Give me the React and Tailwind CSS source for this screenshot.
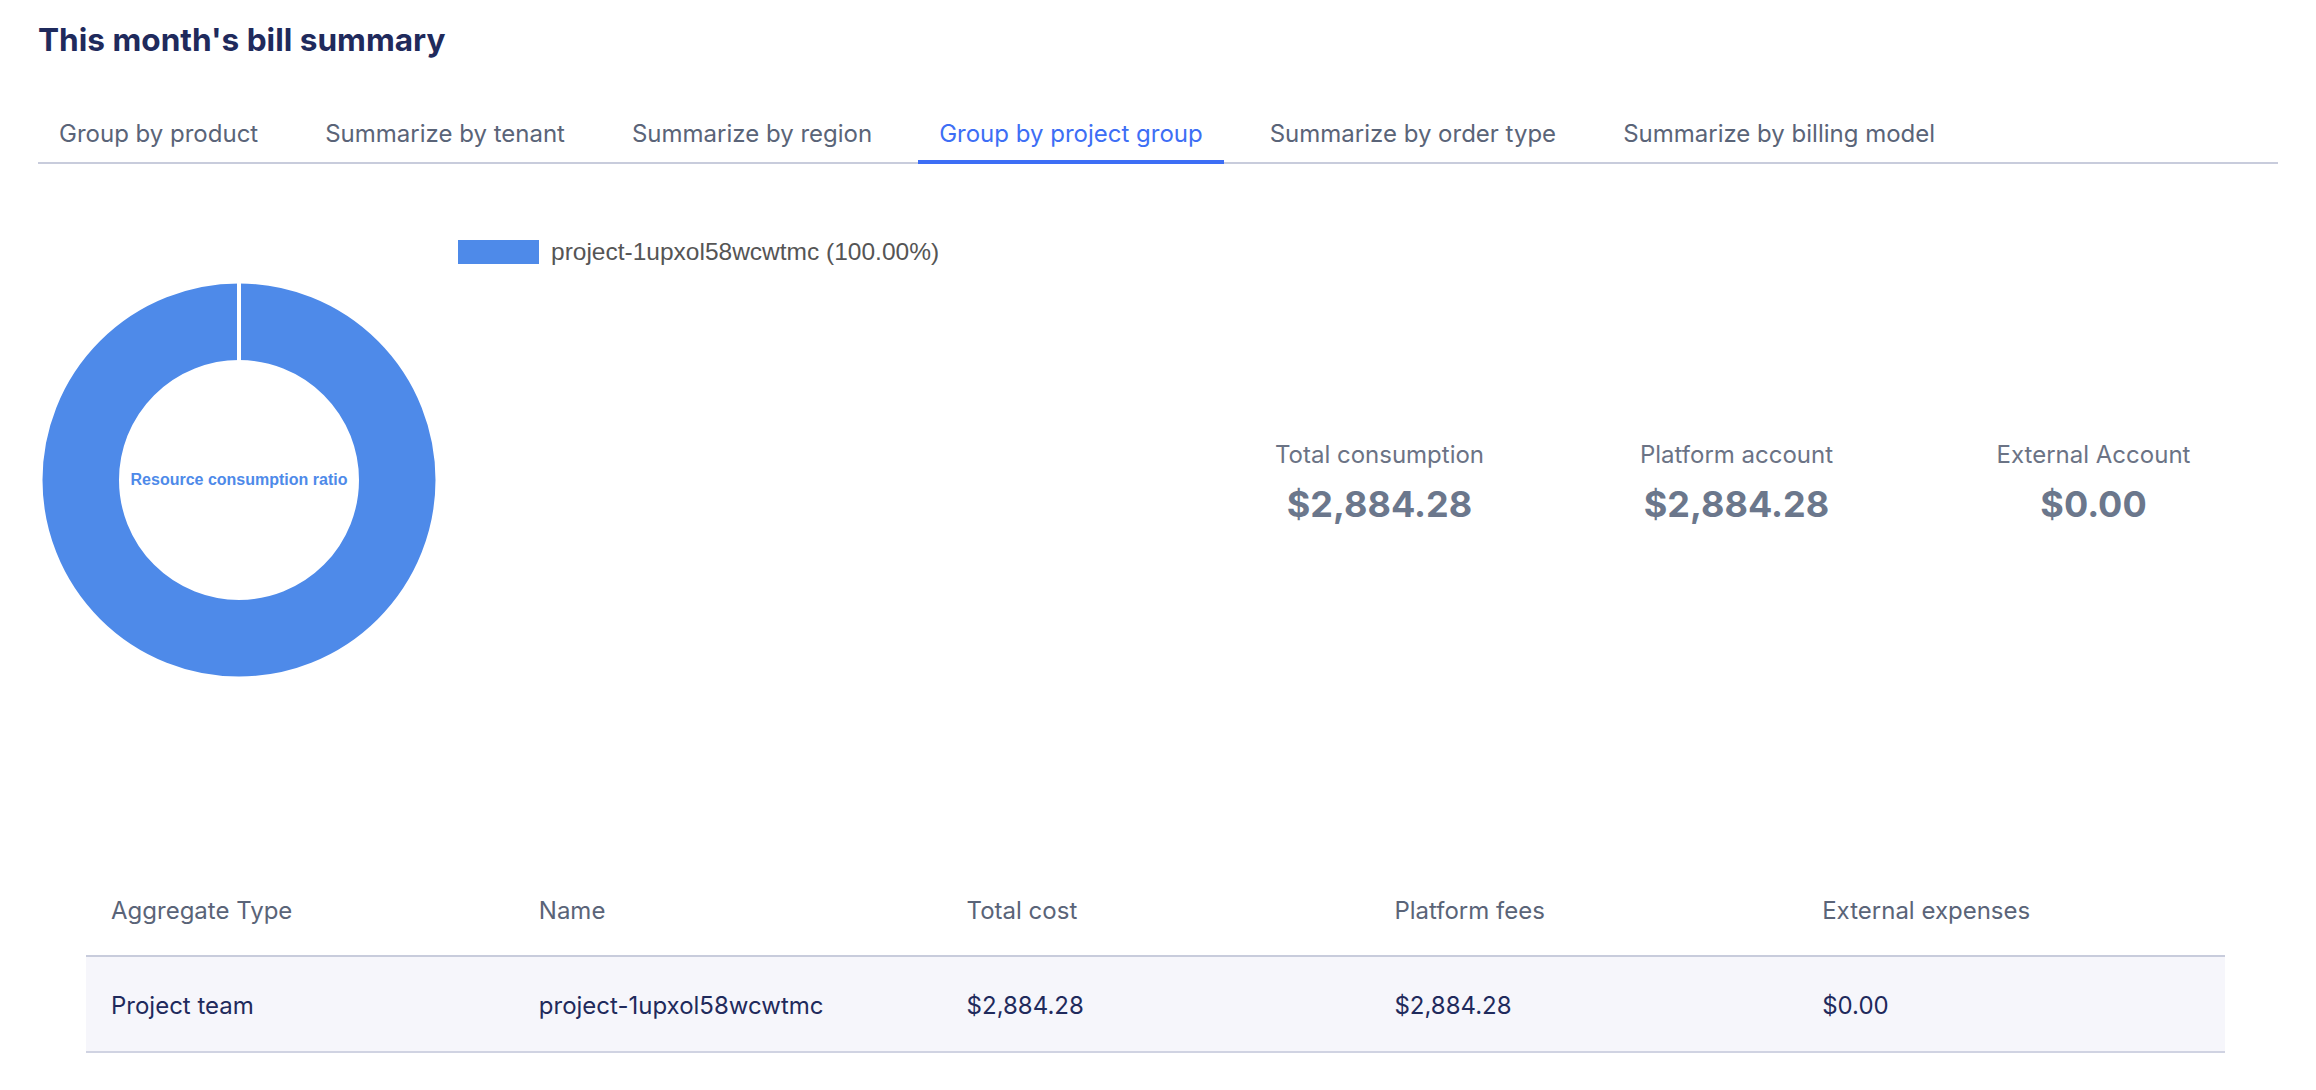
import React from "react";

const tabs = [
  "Group by product",
  "Summarize by tenant",
  "Summarize by region",
  "Group by project group",
  "Summarize by order type",
  "Summarize by billing model",
];

const stats = [
  { label: "Total consumption", value: "$2,884.28" },
  { label: "Platform account", value: "$2,884.28" },
  { label: "External Account", value: "$0.00" },
];

const cols = ["Aggregate Type", "Name", "Total cost", "Platform fees", "External expenses"];
const row = ["Project team", "project-1upxol58wcwtmc", "$2,884.28", "$2,884.28", "$0.00"];

function Donut() {
  return (
    <svg width="394" height="394" viewBox="0 0 394 394">
      <circle cx="197" cy="197" r="158.25" fill="none" stroke="#4e8ae9" strokeWidth="76.5" />
      <rect x="195" y="0" width="4" height="80" fill="#ffffff" />
      <text
        x="197"
        y="202"
        textAnchor="middle"
        fill="#4e8ae9"
        fontFamily="'Liberation Sans', Arial, sans-serif"
        fontWeight="700"
        fontSize="16"
      >
        Resource consumption ratio
      </text>
    </svg>
  );
}

export default function App() {
  return (
    <div className="w-full min-h-[1090px] bg-white px-[38px] pt-[20px] font-['Inter',sans-serif]">
      <h1 className="text-[31.6px] leading-[40px] font-bold text-[#1f2a5c]">This month's bill summary</h1>

      <div className="mt-[40px] flex gap-[25px] border-b-2 border-[#c8ccdc]">
        {tabs.map((t, i) => (
          <div
            key={t}
            className={
              i === 3
                ? "relative px-[21px] pt-[18px] pb-[12px] text-[24px] leading-[32px] text-[#3d6ef5] whitespace-nowrap"
                : "relative px-[21px] pt-[18px] pb-[12px] text-[24px] leading-[32px] text-[#5a6478] whitespace-nowrap"
            }
          >
            {t}
            {i === 3 && <span className="absolute left-0 right-0 bottom-[-2px] h-[4px] bg-[#3d6ef5]" />}
          </div>
        ))}
      </div>

      <div className="flex">
        <div className="w-[1163px] flex flex-col">
          <div className="ml-[420px] mt-[74px] flex items-center gap-[12px]">
            <span className="w-[81px] h-[24px] bg-[#4e8ae9]" />
            <span className="font-['Liberation_Sans',Arial,sans-serif] text-[24.5px] leading-[28px] text-[#555555]">
              project-1upxol58wcwtmc (100.00%)
            </span>
          </div>
          <div className="ml-[4px] mt-[17px]">
            <Donut />
          </div>
        </div>
        <div className="flex flex-1 mt-[275px] self-start">
          {stats.map((s) => (
            <div key={s.label} className="w-[357px] flex flex-col items-center">
              <div className="text-[24px] leading-[32px] text-[#6b7385]">{s.label}</div>
              <div className="mt-[11px] text-[36px] leading-[44px] font-bold text-[#6b778c]">{s.value}</div>
            </div>
          ))}
        </div>
      </div>

      <div className="ml-[48px] w-[2139px] mt-[190px]">
        <div className="grid grid-cols-5 border-b-2 border-[#c8ccdc] h-[90px] items-center">
          {cols.map((c) => (
            <div key={c} className="pl-[25px] text-[24px] leading-[32px] text-[#5a6478]">
              {c}
            </div>
          ))}
        </div>
        <div className="grid grid-cols-5 bg-[#f6f6fb] border-b-2 border-[#d0d3e2] h-[96px] pt-[4px] items-center">
          {row.map((c, i) => (
            <div key={i} className="pl-[25px] text-[24px] leading-[32px] text-[#1f2a5c]">
              {c}
            </div>
          ))}
        </div>
      </div>
    </div>
  );
}
